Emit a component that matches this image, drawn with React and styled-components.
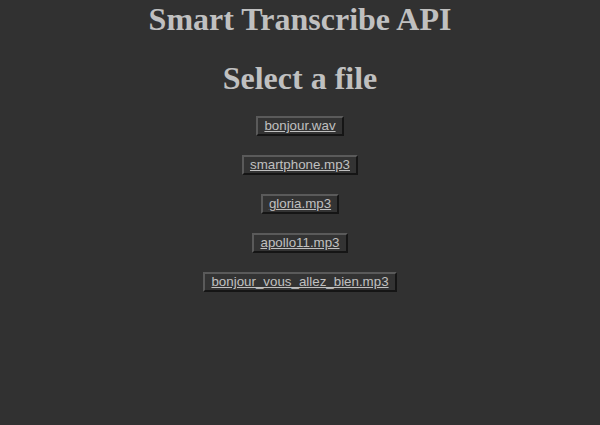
import React from "react";
import styled, { createGlobalStyle } from "styled-components";

const files = [
  "bonjour.wav",
  "smartphone.mp3",
  "gloria.mp3",
  "apollo11.mp3",
  "bonjour_vous_allez_bien.mp3",
];

const GlobalStyle = createGlobalStyle`
  html, body {
    margin: 0;
    background-color: #313131;
  }
`;

const Page = styled.div`
  display: flex;
  flex-direction: column;
  align-items: center;
  padding-top: 1px;
  font-family: "Liberation Serif", "Times New Roman", serif;
  color: #c0c0c0;
`;

const Title = styled.h1`
  font-size: 32px;
  font-weight: bold;
  line-height: normal;
  margin: ${(props) => (props.first ? "0" : "22px 0 19px")};
`;

const FileList = styled.div`
  display: flex;
  flex-direction: column;
  align-items: center;
  gap: 19px;
`;

const FileButton = styled.button`
  font-family: "Liberation Sans", Arial, sans-serif;
  font-size: 13.33px;
  line-height: 14px;
  color: #c0c0c0;
  background-color: #333333;
  padding: 1px 6px;
  border-style: solid;
  border-width: 2px;
  border-color: #5a5a5a #151515 #151515 #5a5a5a;
  text-decoration: underline;
  cursor: pointer;
`;

const App = () => {
  return (
    <React.Fragment>
      <GlobalStyle />
      <Page>
        <Title first>Smart Transcribe API</Title>
        <Title>Select a file</Title>
        <FileList>
          {files.map((f) => (
            <FileButton key={f}>{f}</FileButton>
          ))}
        </FileList>
      </Page>
    </React.Fragment>
  );
};
export default App;
